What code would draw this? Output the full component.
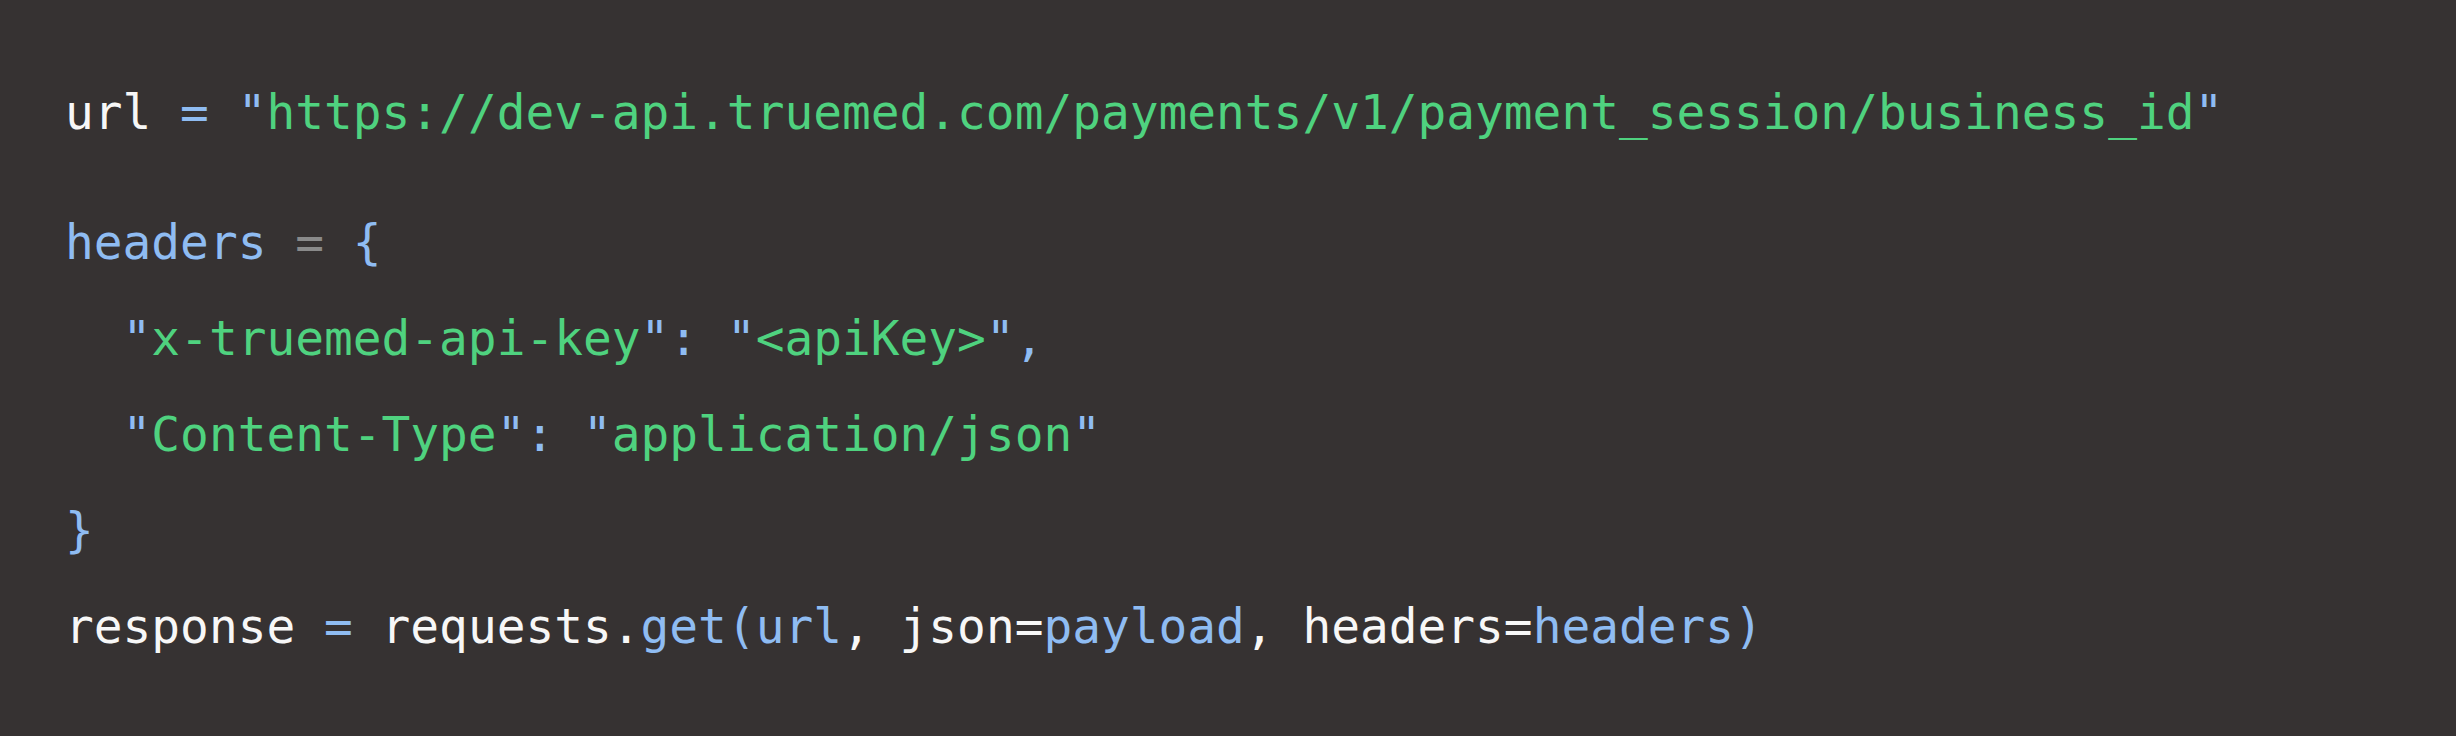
const S = ({ c }: { c: string }) => <span className="text-[#4fd27f]">{c}</span>
const B = ({ c }: { c: string }) => <span className="text-[#8fbcf2]">{c}</span>
const W = ({ c }: { c: string }) => <span className="text-[#f7f7f7]">{c}</span>
const G = ({ c }: { c: string }) => <span className="text-[#8a8a8a]">{c}</span>

function Str({ text }: { text: string }) {
  return (
    <>
      <B c={'"'} />
      <S c={text} />
      <B c={'"'} />
    </>
  )
}

export default function App() {
  return (
    <div className="h-[736px] w-full bg-[#363232] pl-[65px] pt-[65px] font-['DejaVu_Sans_Mono','Liberation_Mono',monospace] text-[47.8px] leading-[96px]">
      <div className="whitespace-pre">
        <W c="url " />
        <B c="= " />
        <Str text="https://dev-api.truemed.com/payments/v1/payment_session/business_id" />
      </div>
      <div className="mt-[34px] whitespace-pre">
        <B c="headers " />
        <G c="= " />
        <B c="{" />
      </div>
      <div className="whitespace-pre pl-[2ch]">
        <Str text="x-truemed-api-key" />
        <B c=": " />
        <Str text="<apiKey>" />
        <B c="," />
      </div>
      <div className="whitespace-pre pl-[2ch]">
        <Str text="Content-Type" />
        <B c=": " />
        <Str text="application/json" />
      </div>
      <div className="whitespace-pre">
        <B c="}" />
      </div>
      <div className="whitespace-pre">
        <W c="response " />
        <B c="= " />
        <W c="requests." />
        <B c="get(url" />
        <W c=", json=" />
        <B c="payload" />
        <W c=", headers=" />
        <B c="headers)" />
      </div>
    </div>
  )
}
